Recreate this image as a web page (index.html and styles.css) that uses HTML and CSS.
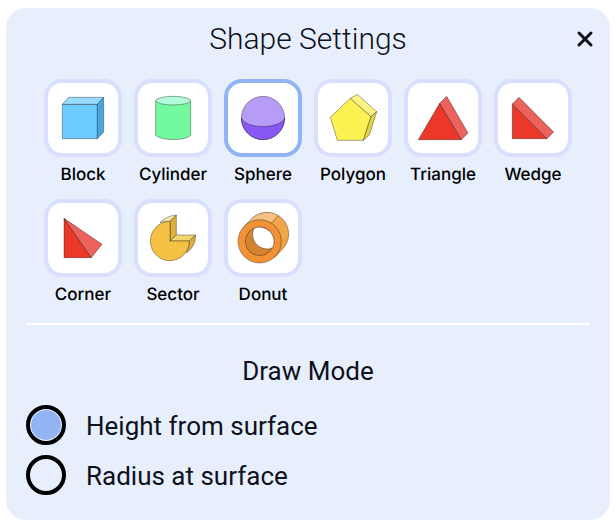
FILE: index.html
```html
<!DOCTYPE html>
<html lang="en">
<head>
<meta charset="utf-8">
<meta name="viewport" content="width=device-width, initial-scale=1">
<title>Shape Settings</title>
<link rel="stylesheet" href="styles.css">
</head>
<body>
<main class="panel">
  <header class="panel-header">
    <h1 class="title">Shape Settings</h1>
    <button class="close" type="button" aria-label="Close">
      <svg class="close-icon" viewBox="0 0 18 18"><path d="M3 3 15 15M15 3 3 15"/></svg>
    </button>
  </header>

  <div class="shapes">
    <button class="shape" type="button">
      <span class="tile"><svg class="icon" viewBox="24 24 210 210">
        <path fill="#6ccbff" d="M67 88H172V191H67Z"/>
        <path fill="#98dcff" d="M67 88 86 67H191L172 88Z"/>
        <path fill="#48a5df" d="M172 88 191 67V171L172 191Z"/>
      </svg></span>
      <span class="name">Block</span>
    </button>
    <button class="shape" type="button">
      <span class="tile"><svg class="icon" viewBox="24 24 210 210">
        <path fill="#73fa9e" d="M77 77V181C92 198 167 198 182 181V77Z"/>
        <ellipse fill="#b2fdd7" cx="129.500" cy="77" rx="52.500" ry="13"/>
      </svg></span>
      <span class="name">Cylinder</span>
    </button>
    <button class="shape" type="button" aria-pressed="true">
      <span class="tile"><svg class="icon" viewBox="24 24 210 210">
        <circle fill="#b69cf7" cx="129" cy="129" r="65"/>
        <path fill="#8958f4" d="M64 129A65 65 0 0 0 194 129C180 163 78 163 64 129Z"/>
      </svg></span>
      <span class="name">Sphere</span>
    </button>
    <button class="shape" type="button">
      <span class="tile"><svg class="icon" viewBox="24 24 210 210">
        <path fill="#fbf251" d="M121 70 61 127 82 196H160L183 125Z"/>
        <path fill="#fbf383" d="M121 70 142 58 200 110 183 125Z"/>
        <path fill="#e2d448" d="M183 125 200 110 178 180 160 196Z"/>
      </svg></span>
      <span class="name">Polygon</span>
    </button>
    <button class="shape" type="button">
      <span class="tile"><svg class="icon" viewBox="24 24 210 210">
        <path fill="#eb3829" d="M119 85 55 194H184Z"/>
        <path fill="#ec625c" d="M119 85 140 64 204 174 184 194Z"/>
      </svg></span>
      <span class="name">Triangle</span>
    </button>
    <button class="shape" type="button">
      <span class="tile"><svg class="icon" viewBox="24 24 210 210">
        <path fill="#eb3829" d="M67 87V191H171Z"/>
        <path fill="#ec625c" d="M67 87 87 67 191 171 171 191Z"/>
      </svg></span>
      <span class="name">Wedge</span>
    </button>
    <button class="shape" type="button">
      <span class="tile"><svg class="icon" viewBox="24 24 210 210">
        <path fill="#eb3829" d="M72 70V188H154Z"/>
        <path fill="#ec625c" d="M72 70 186 148 154 188Z"/>
      </svg></span>
      <span class="name">Corner</span>
    </button>
    <button class="shape" type="button">
      <span class="tile"><svg class="icon" viewBox="24 24 210 210">
        <path fill="#fbe7b5" d="M90 83C101 72 116 62 139 60L120 79Q102 77 90 83Z"/>
        <path fill="#deae3f" d="M120 79 139 60V120L120 138Z"/>
        <path fill="#f4d570" d="M120 138 139 120H197L178 138Z"/>
        <path fill="#deae3f" d="M178 138 197 120C196 143 190 158 169 174Q178 159 178 138Z"/>
        <path fill="#f5c144" d="M120 138V79A58.500 59 0 1 0 178 138Z"/>
      </svg></span>
      <span class="name">Sector</span>
    </button>
    <button class="shape" type="button">
      <span class="tile"><svg class="icon" viewBox="24 24 210 210">
        <path fill="#f2a448" stroke="none" d="M73 96 95 71A65 65 0 0 1 187 163L162 190Z"/>
        <path fill="#f5c083" stroke="none" d="M73 96 95 71C117 47 153 46 174 63L154 84C132 68 93 74 73 96Z"/>
        <path fill="none" d="M73 93 95 71A65 65 0 0 1 187 163L165 185M174 63 154 84"/>
        <circle fill="#f09235" cx="119" cy="139" r="65"/>
        <circle fill="#d48431" cx="119" cy="139" r="43"/>
        <path fill="#fff" d="M102 100A43 43 0 0 1 158 158A43 43 0 0 1 102 100Z"/>
      </svg></span>
      <span class="name">Donut</span>
    </button>
  </div>

  <fieldset class="modes">
    <legend class="subtitle">Draw Mode</legend>
    <label class="mode"><input class="radio" type="radio" name="mode" checked>Height from surface</label>
    <label class="mode"><input class="radio" type="radio" name="mode">Radius at surface</label>
  </fieldset>
</main>
</body>
</html>
```
FILE: styles.css
```css
* {
  box-sizing: border-box;
}

body {
  margin: 8px 6px;
  background: #fff;
  color: #10111c;
  font-family: Roboto, sans-serif;
}

.panel {
  padding: 0 20px 23px;
  border-radius: 20px;
  background: #e7effd;
}

.panel-header {
  display: grid;
  grid-template-columns: 1fr auto 1fr;
  align-items: center;
  height: 62px;
}

.title {
  grid-column: 2;
  margin: 0;
  font-size: 30px;
  font-weight: 300;
  line-height: 40px;
}

.close {
  justify-self: end;
  display: flex;
  margin-right: -4px;
  padding: 0;
  border: 0;
  background: none;
  color: inherit;
}

.close-icon {
  width: 18px;
  height: 18px;
  fill: none;
  stroke: currentColor;
  stroke-width: 3;
  stroke-linecap: round;
}

.shapes {
  display: flex;
  flex-wrap: wrap;
  gap: 6px 0;
  padding: 9px 12px 10px;
}

.shape {
  display: flex;
  flex-direction: column;
  align-items: center;
  width: 90px;
  padding: 0;
  border: 0;
  background: none;
  color: #000;
  font-family: Inter, sans-serif;
  font-size: 17px;
  font-weight: 500;
  font-optical-sizing: none;
  line-height: 36px;
  text-rendering: geometricPrecision;
}

.tile {
  width: 78px;
  height: 78px;
  border: 4px solid #d9dffe;
  border-radius: 18px;
  background: #fff;
}

.shape[aria-pressed="true"] .tile {
  border-color: #92b4f4;
}

.icon {
  display: block;
  stroke: rgb(0 0 0 / 50%);
  stroke-width: 2;
  stroke-linejoin: round;
}

.modes {
  display: flex;
  flex-direction: column;
  gap: 8px;
  margin: 0;
  padding: 0;
  border: 0;
  border-top: 2px solid #fff;
}

.subtitle {
  float: left;
  width: 100%;
  padding: 27px 0 7px;
  font-size: 26px;
  line-height: 38px;
  text-align: center;
}

.mode {
  display: flex;
  align-items: flex-start;
  gap: 20px;
  font-size: 26px;
  line-height: 42px;
}

.radio {
  appearance: none;
  width: 40px;
  height: 40px;
  margin: 0;
  padding: 1px;
  border: 4px solid #000;
  border-radius: 50%;
}

.radio:checked {
  background: #92b4f4 content-box;
}
```
